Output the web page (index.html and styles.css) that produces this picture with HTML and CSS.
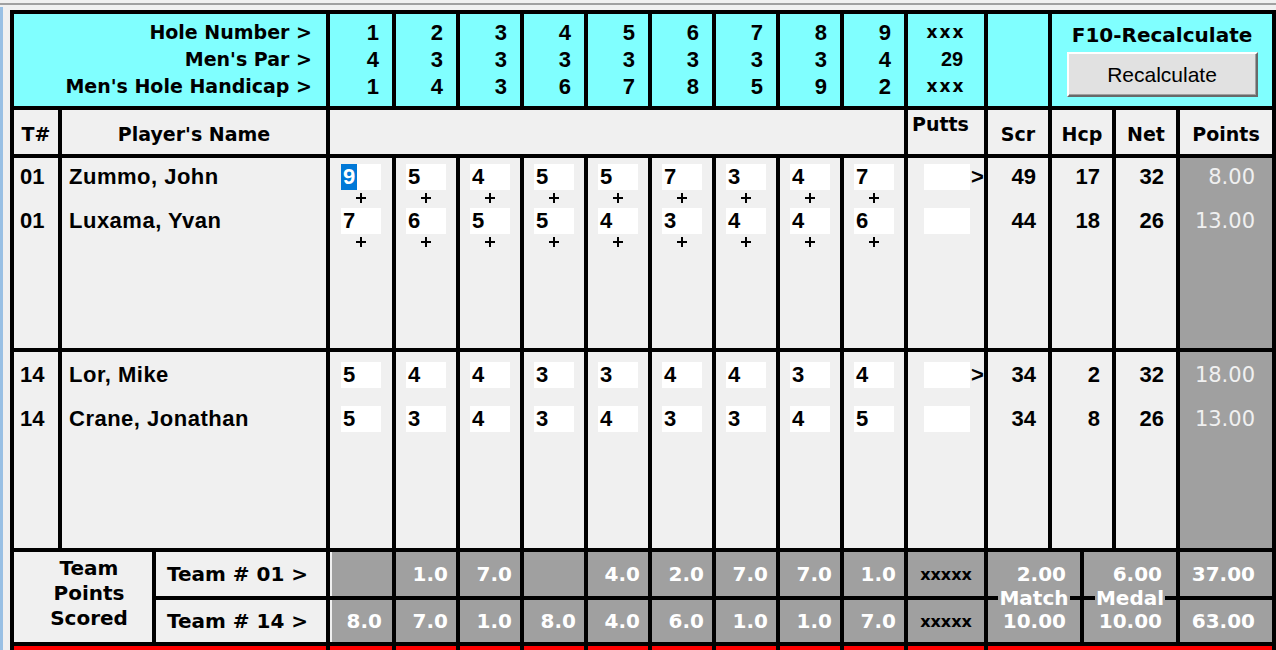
FILE: index.html
```html
<!DOCTYPE html>
<html>
<head>
<meta charset="utf-8">
<title>Scorecard</title>
<link rel="stylesheet" href="styles.css">
</head>
<body>
<div class="topline"></div>
<div class="main">
  <div class="edge"></div>
  <div class="card">
    <div class="grid hdr">
      <div class="cy labels">Hole Number &gt;<br>Men's Par &gt;<br>Men's Hole Handicap &gt;</div>
      <div class="cy hnum">1<br>4<br>1</div>
      <div class="cy hnum">2<br>3<br>4</div>
      <div class="cy hnum">3<br>3<br>3</div>
      <div class="cy hnum">4<br>3<br>6</div>
      <div class="cy hnum">5<br>3<br>7</div>
      <div class="cy hnum">6<br>3<br>8</div>
      <div class="cy hnum">7<br>3<br>5</div>
      <div class="cy hnum">8<br>3<br>9</div>
      <div class="cy hnum">9<br>4<br>2</div>
      <div class="cy tot"><span class="xs">xxx</span><span class="par">29</span><span class="xs">xxx</span></div>
      <div class="cy"></div>
      <div class="cy f10">
        <div class="f10t">F10-Recalculate</div>
        <button class="btn" type="button">Recalculate</button>
      </div>
    </div>

    <div class="grid sub">
      <div class="lg th">T#</div>
      <div class="lg th">Player's Name</div>
      <div class="lg blank"></div>
      <div class="lg putts-h">Putts</div>
      <div class="lg th">Scr</div>
      <div class="lg th">Hcp</div>
      <div class="lg th">Net</div>
      <div class="lg th">Points</div>
    </div>

    <div class="grid grp g1">
      <div class="lg col tcol"><div class="ent num">01</div><div class="ent num">01</div></div>
      <div class="lg col name"><div class="ent num">Zummo, John</div><div class="ent num">Luxama, Yvan</div></div>
      <div class="lg col hole"><div class="ent"><div class="box"><span class="sel">9</span></div><div class="plus"></div></div><div class="ent"><div class="box">7</div><div class="plus"></div></div></div>
      <div class="lg col hole"><div class="ent"><div class="box">5</div><div class="plus"></div></div><div class="ent"><div class="box">6</div><div class="plus"></div></div></div>
      <div class="lg col hole"><div class="ent"><div class="box">4</div><div class="plus"></div></div><div class="ent"><div class="box">5</div><div class="plus"></div></div></div>
      <div class="lg col hole"><div class="ent"><div class="box">5</div><div class="plus"></div></div><div class="ent"><div class="box">5</div><div class="plus"></div></div></div>
      <div class="lg col hole"><div class="ent"><div class="box">5</div><div class="plus"></div></div><div class="ent"><div class="box">4</div><div class="plus"></div></div></div>
      <div class="lg col hole"><div class="ent"><div class="box">7</div><div class="plus"></div></div><div class="ent"><div class="box">3</div><div class="plus"></div></div></div>
      <div class="lg col hole"><div class="ent"><div class="box">3</div><div class="plus"></div></div><div class="ent"><div class="box">4</div><div class="plus"></div></div></div>
      <div class="lg col hole"><div class="ent"><div class="box">4</div><div class="plus"></div></div><div class="ent"><div class="box">4</div><div class="plus"></div></div></div>
      <div class="lg col hole"><div class="ent"><div class="box">7</div><div class="plus"></div></div><div class="ent"><div class="box">6</div><div class="plus"></div></div></div>
      <div class="lg col putts"><div class="ent"><div class="pbox"></div><span class="gt">&gt;</span></div><div class="ent"><div class="pbox"></div></div></div>
      <div class="lg col"><div class="ent num rnum">49</div><div class="ent num rnum">44</div></div>
      <div class="lg col"><div class="ent num rnum">17</div><div class="ent num rnum">18</div></div>
      <div class="lg col"><div class="ent num rnum">32</div><div class="ent num rnum">26</div></div>
      <div class="gr col"><div class="ent pts">8.00</div><div class="ent pts">13.00</div></div>
    </div>

    <div class="grid grp g2">
      <div class="lg col tcol"><div class="ent num">14</div><div class="ent num">14</div></div>
      <div class="lg col name"><div class="ent num">Lor, Mike</div><div class="ent num">Crane, Jonathan</div></div>
      <div class="lg col hole"><div class="ent"><div class="box">5</div></div><div class="ent"><div class="box">5</div></div></div>
      <div class="lg col hole"><div class="ent"><div class="box">4</div></div><div class="ent"><div class="box">3</div></div></div>
      <div class="lg col hole"><div class="ent"><div class="box">4</div></div><div class="ent"><div class="box">4</div></div></div>
      <div class="lg col hole"><div class="ent"><div class="box">3</div></div><div class="ent"><div class="box">3</div></div></div>
      <div class="lg col hole"><div class="ent"><div class="box">3</div></div><div class="ent"><div class="box">4</div></div></div>
      <div class="lg col hole"><div class="ent"><div class="box">4</div></div><div class="ent"><div class="box">3</div></div></div>
      <div class="lg col hole"><div class="ent"><div class="box">4</div></div><div class="ent"><div class="box">3</div></div></div>
      <div class="lg col hole"><div class="ent"><div class="box">3</div></div><div class="ent"><div class="box">4</div></div></div>
      <div class="lg col hole"><div class="ent"><div class="box">4</div></div><div class="ent"><div class="box">5</div></div></div>
      <div class="lg col putts"><div class="ent"><div class="pbox"></div><span class="gt">&gt;</span></div><div class="ent"><div class="pbox"></div></div></div>
      <div class="lg col"><div class="ent num rnum">34</div><div class="ent num rnum">34</div></div>
      <div class="lg col"><div class="ent num rnum">2</div><div class="ent num rnum">8</div></div>
      <div class="lg col"><div class="ent num rnum">32</div><div class="ent num rnum">26</div></div>
      <div class="gr col"><div class="ent pts">18.00</div><div class="ent pts">13.00</div></div>
    </div>

    <div class="team">
      <div class="lg tps">Team<br>Points<br>Scored</div>
      <div class="lg tl r1">Team # 01 &gt;</div>
      <div class="tv r1 first"></div>
      <div class="tv r1">1.0</div>
      <div class="tv r1">7.0</div>
      <div class="tv r1"></div>
      <div class="tv r1">4.0</div>
      <div class="tv r1">2.0</div>
      <div class="tv r1">7.0</div>
      <div class="tv r1">7.0</div>
      <div class="tv r1">1.0</div>
      <div class="xx r1">xxxxx</div>
      <div class="mm match"><div class="v1">2.00</div><div class="lbl">Match</div><div class="v2">10.00</div></div>
      <div class="mm medal"><div class="v1">6.00</div><div class="lbl">Medal</div><div class="v2">10.00</div></div>
      <div class="tv r1 tp">37.00</div>
      <div class="lg tl r2">Team # 14 &gt;</div>
      <div class="tv r2 first">8.0</div>
      <div class="tv r2">7.0</div>
      <div class="tv r2">1.0</div>
      <div class="tv r2">8.0</div>
      <div class="tv r2">4.0</div>
      <div class="tv r2">6.0</div>
      <div class="tv r2">1.0</div>
      <div class="tv r2">1.0</div>
      <div class="tv r2">7.0</div>
      <div class="xx r2">xxxxx</div>
      <div class="tv r2 tp">63.00</div>
    </div>

    <div class="grid redrow">
      <div class="rd wide2"></div>
      <div class="rd"></div><div class="rd"></div><div class="rd"></div>
      <div class="rd"></div><div class="rd"></div><div class="rd"></div>
      <div class="rd"></div><div class="rd"></div><div class="rd"></div>
      <div class="rd"></div>
      <div class="rd wide4"></div>
    </div>
  </div>
</div>
</body>
</html>
```

FILE: styles.css
```css
html, body {
  margin: 0;
  padding: 0;
}
body {
  background: #f0f0f0;
  width: 1276px;
  height: 650px;
  overflow: hidden;
  font-family: "DejaVu Sans", sans-serif;
  color: #000;
}
.topline {
  height: 2px;
  margin-top: 3px;
  background: #a0a0a0;
}
.main {
  display: flex;
  margin-top: 5px;
}
.edge {
  width: 3px;
  margin-top: -3px;
  background: #99c0e4;
  flex: none;
}
.card {
  margin-left: 7px;
  width: 1258px;
  background: #000;
  padding: 4px 4px 0 4px;
  display: flex;
  flex-direction: column;
  gap: 4px;
}
.grid {
  display: grid;
  grid-template-columns: 44px 264px 62px repeat(8, 60px) 76px 60px 60px 60px 92px;
  column-gap: 4px;
}
.cy { background: #80ffff; }
.lg { background: #f0f0f0; }
.gr { background: #a0a0a0; }

/* header */
.hdr { height: 92px; }
.labels {
  grid-column: 1 / 3;
  text-align: right;
  padding: 5px 14px 0 0;
  font: bold 19px/27px "DejaVu Sans", sans-serif;
}
.hnum {
  text-align: right;
  padding: 5px 13px 0 0;
  font: bold 22px/27px "Liberation Sans", sans-serif;
}
.tot {
  display: flex;
  flex-direction: column;
  align-items: center;
  padding-top: 5px;
}
.xs {
  font: bold 17px/27px "DejaVu Sans", sans-serif;
  letter-spacing: 2px;
  height: 27px;
}
.par {
  font: bold 20px/27px "Liberation Sans", sans-serif;
  height: 27px;
  padding-left: 12px;
}
.f10 {
  grid-column: 14 / 17;
  display: flex;
  flex-direction: column;
  align-items: center;
  padding-top: 9px;
}
.f10t {
  font: bold 20px/24px "DejaVu Sans", sans-serif;
}
.btn {
  margin-top: 5px;
  width: 191px;
  height: 45px;
  background: #e1e1e1;
  border: 2px solid;
  border-color: #ffffff #696969 #696969 #ffffff;
  box-shadow: inset -1px -1px 0 #a0a0a0;
  font: 21px "Liberation Sans", sans-serif;
  color: #000;
  padding: 0;
}

/* sub header */
.sub { height: 44px; }
.th {
  display: flex;
  align-items: center;
  justify-content: center;
  padding-top: 4px;
  font: bold 19px "DejaVu Sans", sans-serif;
}
.blank { grid-column: 3 / 12; }
.putts-h {
  padding: 3px 0 0 4px;
  font: bold 19px "DejaVu Sans", sans-serif;
}

/* groups */
.g1 { height: 190px; }
.g2 { height: 196px; }
.col {
  display: flex;
  flex-direction: column;
  padding-top: 6px;
}
.g2 .col { padding-top: 10px; }
.ent {
  height: 44px;
  flex: none;
}
.num {
  font: bold 22px/26px "Liberation Sans", sans-serif;
  white-space: nowrap;
}
.tcol .num { padding-left: 6px; }
.name .num { padding-left: 7px; letter-spacing: 0.5px; }
.rnum { text-align: right; padding-right: 12px; }
.pts {
  color: #f0f0f0;
  font: 21px/26px "DejaVu Sans", sans-serif;
  text-align: right;
  padding-right: 17px;
}
.hole .ent {
  display: flex;
  flex-direction: column;
  align-items: center;
}
.box {
  width: 40px;
  height: 26px;
  background: #fff;
  font: bold 22px/26px "Liberation Sans", sans-serif;
  padding-left: 2px;
  box-sizing: border-box;
}
.sel {
  display: inline-block;
  height: 26px;
  margin-left: -2px;
  padding: 0 2px 0 2px;
  background: #0078d7;
  color: #fff;
}
.plus {
  width: 10px;
  height: 10px;
  margin-top: 3px;
  background:
    linear-gradient(#000, #000) 0 4px / 10px 2px no-repeat,
    linear-gradient(#000, #000) 4px 0 / 2px 10px no-repeat;
}
.putts .ent {
  display: flex;
  align-items: flex-start;
  padding-left: 16px;
}
.pbox {
  width: 46px;
  height: 26px;
  background: #fff;
}
.gt {
  margin-left: 1px;
  font: bold 22px/26px "Liberation Sans", sans-serif;
}

/* team */
.team {
  display: grid;
  grid-template-columns: 138px 170px 62px repeat(8, 60px) 76px 92px 92px 92px;
  grid-template-rows: 44px 42px;
  column-gap: 4px;
  row-gap: 4px;
}
.r1 { grid-row: 1; }
.r2 { grid-row: 2; }
.tps {
  grid-column: 1;
  grid-row: 1 / 3;
  text-align: center;
  padding: 4px 0 0 12px;
  font: bold 20px/25px "DejaVu Sans", sans-serif;
}
.tl {
  display: flex;
  align-items: center;
  padding-left: 11px;
  font: bold 20px "DejaVu Sans", sans-serif;
  white-space: pre;
}
.tv {
  background: #a0a0a0;
  color: #fff;
  display: flex;
  align-items: center;
  justify-content: flex-end;
  padding-right: 8px;
  font: bold 20px "DejaVu Sans", sans-serif;
}
.tv.first { box-shadow: inset 2px 0 0 #f0f0f0; padding-right: 10px; }
.tv.tp { grid-column: 15; padding-right: 17px; }
.xx {
  grid-column: 12;
  background: #a0a0a0;
  display: flex;
  align-items: center;
  justify-content: center;
  font: bold 16px "DejaVu Sans", sans-serif;
}
.mm {
  grid-row: 1 / 3;
  background: #a0a0a0;
  color: #fff;
  position: relative;
  display: flex;
  flex-direction: column;
  font: bold 20px "DejaVu Sans", sans-serif;
}
.match { grid-column: 13; }
.medal { grid-column: 14; }
.mm::before {
  content: "";
  position: absolute;
  left: 0;
  right: 0;
  top: 44px;
  height: 4px;
  background: #000;
}
.v1, .v2 {
  display: flex;
  align-items: center;
  justify-content: flex-end;
  padding-right: 14px;
}
.v1 { height: 44px; }
.v2 { height: 22px; }
.lbl {
  position: relative;
  z-index: 1;
  align-self: center;
  margin-top: -10px;
  height: 24px;
  line-height: 24px;
  padding: 0 1px;
  background: #a0a0a0;
}

/* red row */
.redrow { height: 10px; }
.rd { background: #ff0000; }
.wide2 { grid-column: 1 / 3; }
.wide4 { grid-column: 13 / 17; }
```
